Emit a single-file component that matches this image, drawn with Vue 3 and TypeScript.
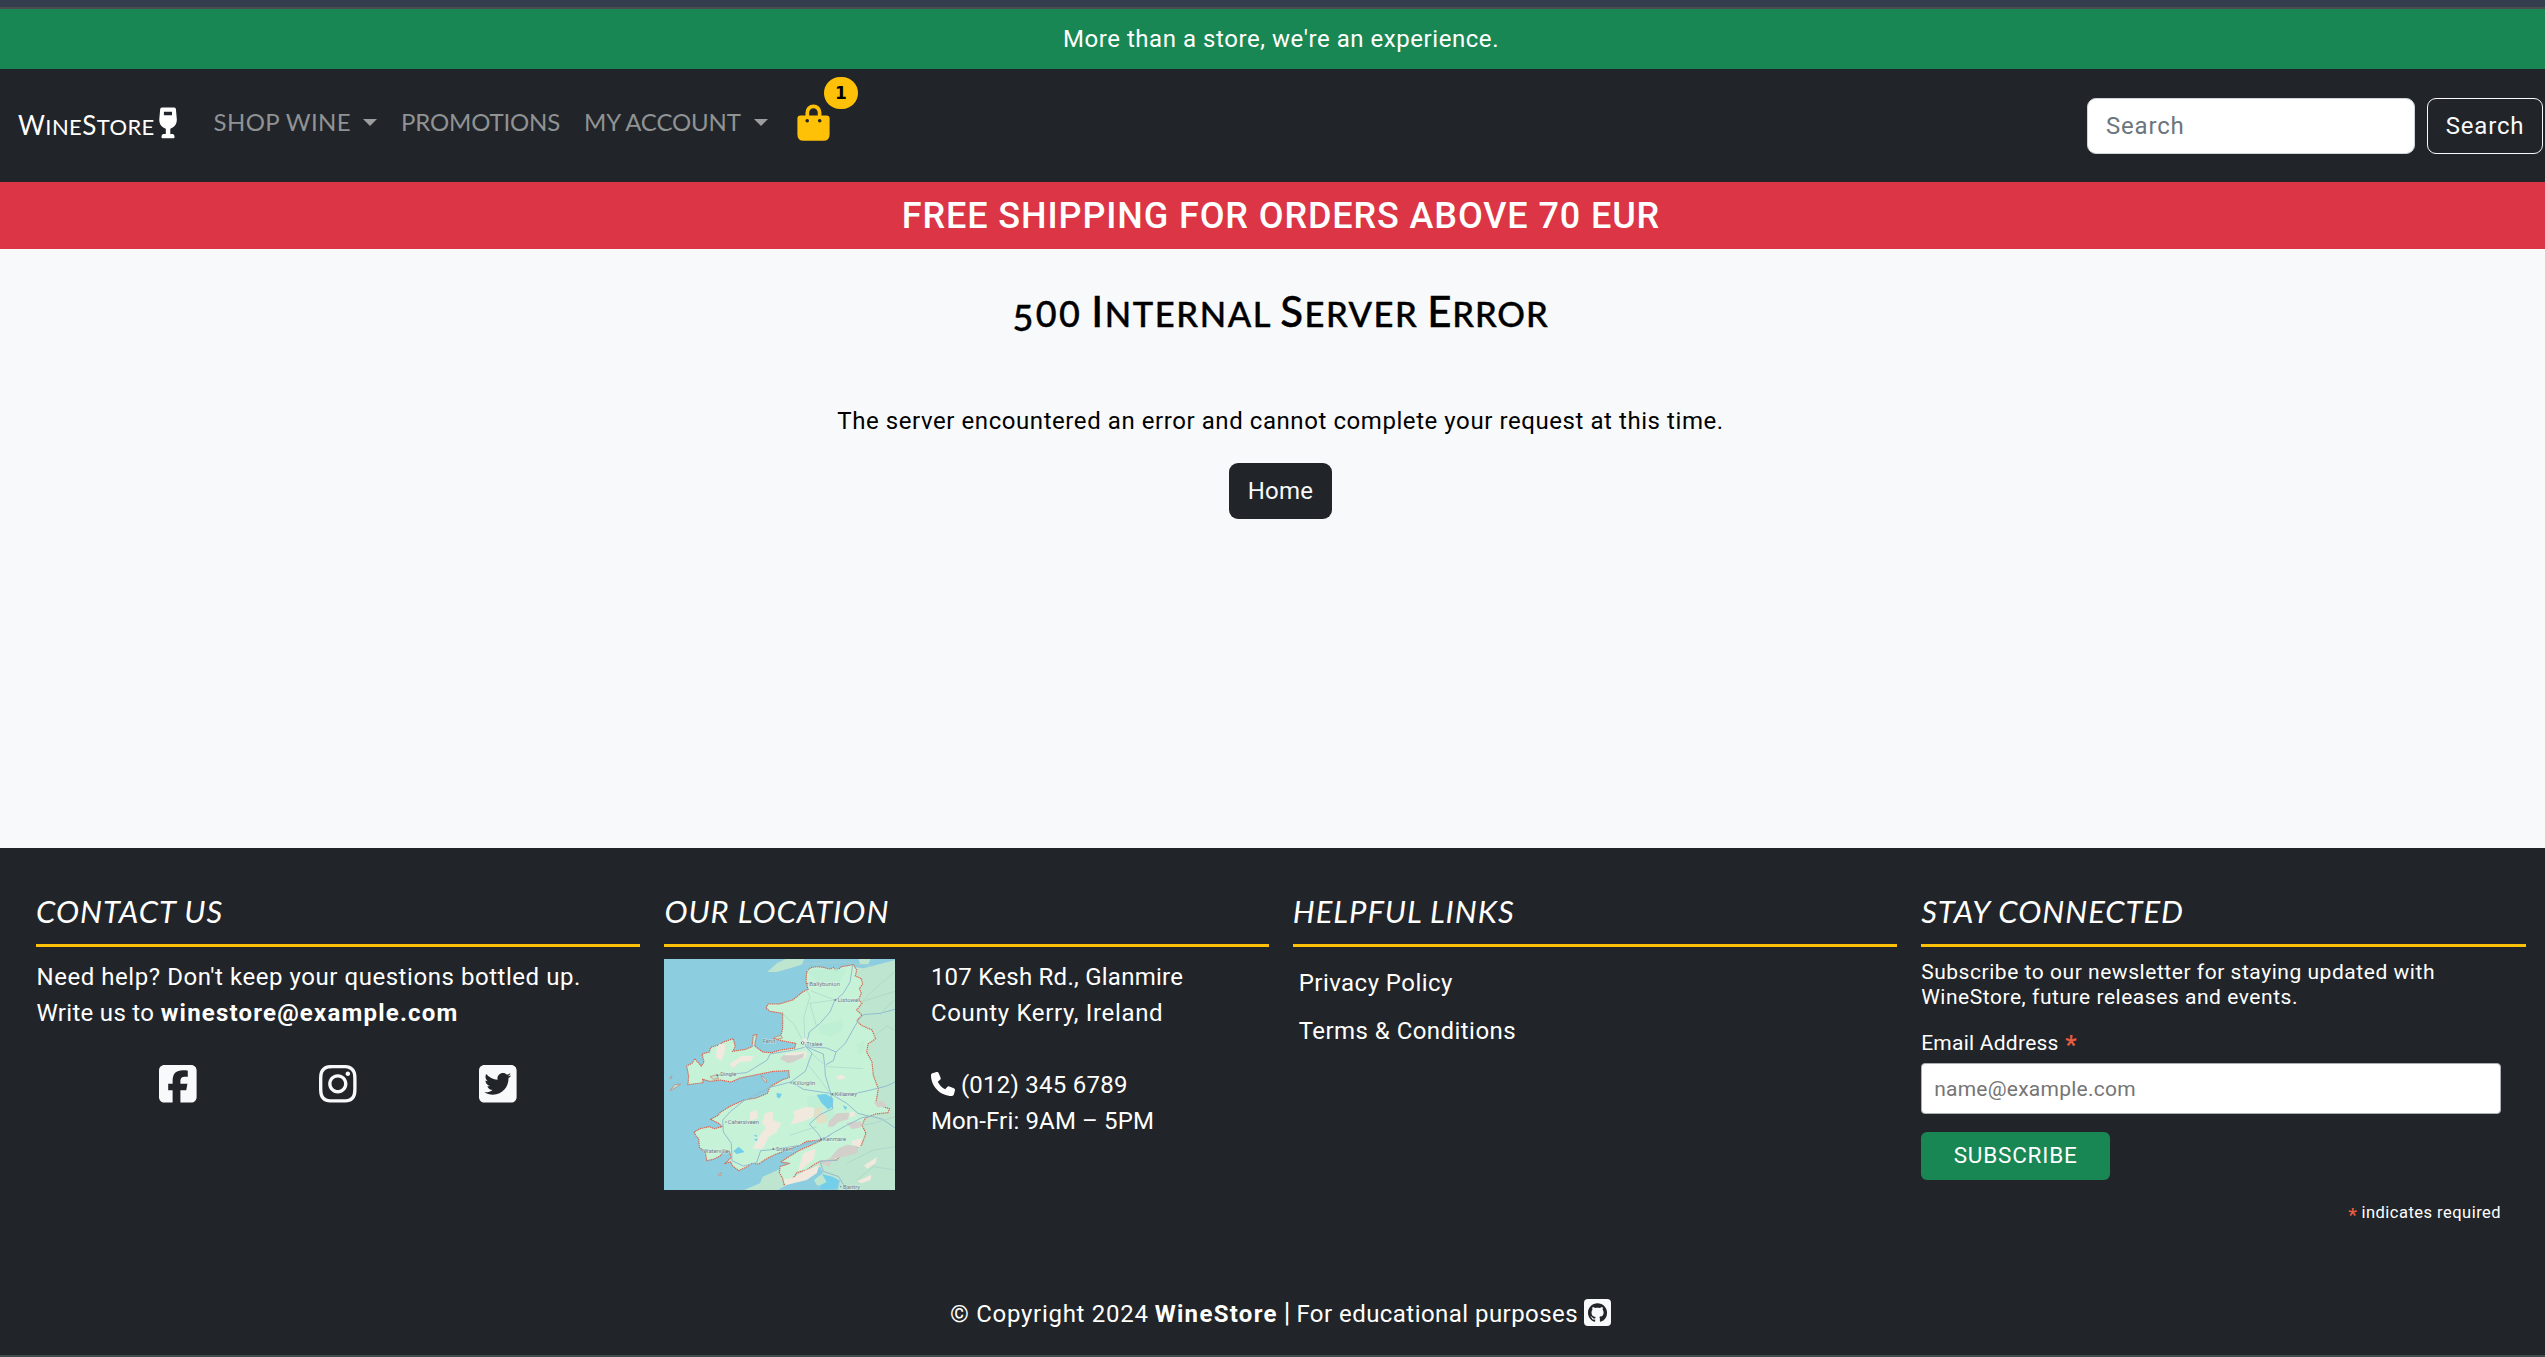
<script setup lang="ts">
interface Place {
  name: string
  x: number
  y: number
  width: number
}

const places: Place[] = [
  { name: 'Ballybunion', x: 448, y: 107, width: 92 },
  { name: 'Listowel', x: 533, y: 157, width: 66 },
  { name: 'Fenit', x: 308, y: 280, width: 38 },
  { name: 'Tralee', x: 439, y: 287, width: 48 },
  { name: 'Dingle', x: 181, y: 379, width: 48 },
  { name: 'Killorglin', x: 399, y: 405, width: 67 },
  { name: 'Killarney', x: 524, y: 439, width: 67 },
  { name: 'Cahersiveen', x: 203, y: 523, width: 94 },
  { name: 'Kenmare', x: 489, y: 572, width: 69 },
  { name: 'Waterville', x: 130, y: 610, width: 76 },
  { name: 'Sneem', x: 348, y: 603, width: 52 },
  { name: 'Bantry', x: 549, y: 716, width: 51 },
]

const social = [
  {
    name: 'Facebook',
    path: 'M64 32C28.7 32 0 60.7 0 96V416c0 35.3 28.7 64 64 64h98.2V334.2H109.4V256h52.8V222.3c0-87.1 39.4-127.5 125-127.5c16.2 0 44.2 3.2 55.7 6.4V172c-6-.6-16.5-1-29.6-1c-42 0-58.2 15.9-58.2 57.2V256h83.6l-14.4 78.2H255V480H384c35.3 0 64-28.7 64-64V96c0-35.3-28.7-64-64-64H64z',
  },
  {
    name: 'Instagram',
    path: 'M224.1 141c-63.6 0-114.9 51.3-114.9 114.9s51.3 114.9 114.9 114.9S339 319.5 339 255.9 287.7 141 224.1 141zm0 189.6c-41.1 0-74.7-33.5-74.7-74.7s33.5-74.7 74.7-74.7 74.7 33.5 74.7 74.7-33.6 74.7-74.7 74.7zm146.4-194.3c0 14.9-12 26.8-26.8 26.8-14.9 0-26.8-12-26.8-26.8s12-26.8 26.8-26.8 26.8 12 26.8 26.8zm76.1 27.2c-1.7-35.9-9.9-67.7-36.2-93.9-26.2-26.2-58-34.4-93.9-36.2-37-2.1-147.9-2.1-184.9 0-35.8 1.7-67.6 9.9-93.9 36.1s-34.4 58-36.2 93.9c-2.1 37-2.1 147.9 0 184.9 1.7 35.9 9.9 67.7 36.2 93.9s58 34.4 93.9 36.2c37 2.1 147.9 2.1 184.9 0 35.9-1.7 67.7-9.9 93.9-36.2 26.2-26.2 34.4-58 36.2-93.9 2.1-37 2.1-147.8 0-184.8zM398.8 388c-7.8 19.6-22.9 34.7-42.6 42.6-29.5 11.7-99.5 9-132.1 9s-102.7 2.6-132.1-9c-19.6-7.8-34.7-22.9-42.6-42.6-11.7-29.5-9-99.5-9-132.1s-2.6-102.7 9-132.1c7.8-19.6 22.9-34.7 42.6-42.6 29.5-11.7 99.5-9 132.1-9s102.7-2.6 132.1 9c19.6 7.8 34.7 22.9 42.6 42.6 11.7 29.5 9 99.5 9 132.1s2.7 102.7-9 132.1z',
  },
  {
    name: 'Twitter',
    path: 'M64 32C28.7 32 0 60.7 0 96V416c0 35.3 28.7 64 64 64H384c35.3 0 64-28.7 64-64V96c0-35.3-28.7-64-64-64H64zM351.3 199.3v0c0 86.7-66 186.6-186.6 186.6c-37.2 0-71.7-10.8-100.7-29.4c5.3 .6 10.4 .8 15.8 .8c30.7 0 58.9-10.4 81.4-28c-28.8-.6-53-19.5-61.3-45.5c10.1 1.5 19.2 1.5 29.6-1.2c-30-6.1-52.5-32.5-52.5-64.4v-.8c8.7 4.9 18.9 7.9 29.6 8.3c-18.3-12.2-29.2-32.7-29.2-54.6c0-12.2 3.2-23.4 8.9-33.1c32.3 39.8 80.8 65.8 135.2 68.6c-9.3-44.5 24-80.6 64-80.6c18.9 0 35.9 7.9 47.9 20.7c14.8-2.8 29-8.3 41.6-15.8c-4.9 15.2-15.2 28-28.8 36.1c13.2-1.4 26-5.1 37.8-10.2c-8.9 13.1-20.1 24.7-32.9 34c.2 2.8 .2 5.7 .2 8.5z',
  },
]
</script>

<template>
  <div class="window">
    <div class="page">
      <div class="strip"></div>
      <div class="tagline">More than a store, we're an experience.</div>

      <nav class="navbar">
        <a class="brand">
          <span>W<small>INE</small>S<small>TORE</small></span>
          <svg class="glass" viewBox="0 0 18 32">
            <path
              fill="#fff"
              fill-rule="evenodd"
              d="M3 .5H15.2Q16.8 .5 16.9 2L17.8 12C18 17.5 15.5 20 11.3 21.8V27H13.7Q15.5 27.3 15.5 29.5V30.3Q15.5 31.2 14.6 31.2H3.4Q2.5 31.2 2.5 30.3V29.5Q2.5 27.3 4.3 27H6.8V21.8C2.5 20 .1 17.5 .3 12L1.2 2Q1.4 .5 3 .5ZM4.9 4.8V8.2H13V4.8Z"
            />
          </svg>
        </a>
        <a class="link shop">SHOP WINE<i class="caret"></i></a>
        <a class="link promo">PROMOTIONS</a>
        <a class="link account">MY ACCOUNT<i class="caret"></i></a>
        <a class="cart">
          <svg viewBox="0 0 33 37">
            <path d="M10.3 13V8.5a6.1 6.1 0 0 1 12.3 0V13" fill="none" stroke="#ffc107" stroke-width="3.7" />
            <path fill="#ffc107" d="M3.5 11.4H29.5Q32.6 11.4 32.6 14.5V30.5Q32.6 36.8 26.3 36.8H6.7Q.4 36.8 .4 30.5V14.5Q.4 11.4 3.5 11.4Z" />
            <circle cx="10.2" cy="16.8" r="1.8" fill="#212529" />
            <circle cx="22.7" cy="16.8" r="1.8" fill="#212529" />
          </svg>
          <span class="badge">1</span>
        </a>
        <form class="search" @submit.prevent>
          <input type="text" placeholder="Search" />
          <button>Search</button>
        </form>
      </nav>

      <div class="shipping">FREE SHIPPING FOR ORDERS ABOVE 70 EUR</div>

      <main>
        <h1>
          <span class="code"><b class="five">5</b>00</span>
          <span class="w1">I<small>NTERNAL</small></span>
          <span class="w2">S<small>ERVER</small></span>
          <span class="w3">E<small>RROR</small></span>
        </h1>
        <p>The server encountered an error and cannot complete your request at this time.</p>
        <a class="home">Home</a>
      </main>

      <footer>
        <div class="columns">
          <section>
            <h2>CONTACT US</h2>
            <div class="body">
              Need help? Don't keep your questions bottled up.<br />
              <span class="write">Write us to</span> <b>winestore@example.com</b>
            </div>
            <div class="social">
              <svg v-for="s in social" :key="s.name" viewBox="0 32 448 448" :aria-label="s.name">
                <path :d="s.path" fill="#f8f9fa" />
              </svg>
            </div>
          </section>

          <section>
            <h2>OUR LOCATION</h2>
            <div class="location">
              <svg class="map" viewBox="12 27 693 693">
                <rect x="12" y="27" width="693" height="693" fill="#8ccde0" />
                <!-- neighbouring counties -->
                <path fill="#bde5cf" d="M322 66L352 38L378 27H433L425 44L385 56L350 66ZM596 27H632L625 42L600 42ZM578 50L610 55L660 42L705 30V720H534L540 690L515 700L500 712L470 705L462 690L490 668L480 650L430 666L378 706L355 720H252L300 700L308 680L365 655L480 600L600 480Z" />
                <!-- county body -->
                <path
                  fill="#c6f3d8"
                  stroke="#d9604c"
                  stroke-width="3.4"
                  stroke-dasharray="4 2.2"
                  d="M440 66L452 53L470 50L490 52L510 58L520 52L528 62L545 50L580 44L590 60L586 78L604 86L608 103L598 115L604 130L596 148L606 160L590 180L606 195L590 212L604 226L636 240L647 266L624 282L620 306L636 336L640 376L655 416L648 456L664 468L688 476L684 488L646 492L616 504L606 526L618 550L604 586L576 600L548 610L530 630L480 634L460 645L440 660L410 668L396 690L372 705L368 685L358 668L360 650L390 640L362 636L390 618L420 600L448 588L486 570L440 574L420 586L380 600L344 614L320 626L296 642L276 640L262 650L236 662L218 648L212 636L196 640L214 622L208 604L190 606L180 618L160 628L140 632L136 606L118 592L116 566L108 558L102 546L120 536L148 530L164 536L186 530L176 520L152 508L174 496L182 486L212 468L252 450L288 444L322 430L330 410L366 390L388 382L386 362L340 364L270 378L240 384L214 396L180 390L150 394L128 388L130 398L84 404L86 378L80 348L96 340L104 326L124 348L132 336L126 312L148 306L152 292L178 284L190 276L220 266L226 290L218 304L256 298L276 290L280 256L290 254L284 288L308 306L334 308L362 300L404 294L408 280L386 276L366 272L342 266L362 258L368 236L368 190L330 184L318 174L324 162L358 162L398 150L428 126L444 118L438 96Z"
                />
                <g fill="#b8e6d2" stroke="#ce7b68" stroke-width="2">
                  <path d="M30 422L44 404L62 402L48 412ZM28 384L36 378L34 386ZM174 674L184 668L182 678ZM304 376L320 390L318 398L306 384ZM342 262L362 256L368 264L350 268ZM150 380L170 374L176 386L160 388Z" />
                </g>
                <g fill="#bdeed4" opacity=".8">
                  <path d="M480 226L548 210L550 240L510 262L476 250ZM440 60L560 56L540 96L470 96ZM590 284L612 270L616 304L596 314ZM440 440L520 430L524 520L450 500Z" />
                </g>
                <g fill="#f2e9de">
                  <path d="M178 282L194 282L196 300L184 334L168 322L170 296ZM208 342L246 318L280 318L274 334L240 336L218 354ZM376 310L440 304L438 322L400 334L370 326ZM528 378L546 374L558 384L536 390ZM316 490L340 484L338 510L364 520L350 546L326 560L308 596L278 596L296 560L318 534L306 516ZM270 488L290 480L294 504L270 512ZM400 484L440 470L464 474L460 500L430 514L392 524L404 500ZM430 610L466 596L462 626L430 654L414 664L424 630ZM400 684L434 662L478 646L470 670L440 690L376 706L372 688ZM574 574L606 564L600 592L580 590ZM612 646L650 622L648 638L622 656ZM592 694L634 674L632 690L604 700ZM568 488L584 484L584 498L570 502Z" />
                </g>
                <g fill="#d3cfcb">
                  <path d="M360 326L370 316L410 316L432 310L430 322L400 336L384 340ZM508 512L530 490L568 488L564 508L536 516L520 530L502 530ZM558 518L604 514L602 532L576 538ZM534 596L560 584L592 588L594 608L560 618L520 626L508 650L478 638L510 624ZM642 456L670 452L680 470L652 472Z" />
                </g>
                <path fill="#efd9bd" opacity=".7" d="M464 476L486 468V490L500 496V518L474 522L462 500Z" />
                <g fill="#73cfe9">
                  <path d="M470 434L498 432L520 446L518 470L504 478L484 458ZM350 428L366 432L358 446L350 440ZM548 466L562 472L556 480ZM220 604L236 590L254 606L230 612ZM280 554L292 556L290 562ZM282 568L294 566L290 574ZM270 286L280 284L280 290ZM486 672L518 680L536 690L530 714L486 720L480 706L500 696Z" />
                </g>
                <g fill="none" stroke="#93bcd0" stroke-width="3">
                  <path d="M578 46L570 96L550 130L524 152L510 186L480 220L448 246L444 262L436 288L456 310L448 330L436 364L392 396L330 412L252 452L212 484L188 510L190 546L214 580L216 632L250 648L290 638L302 602L344 598L420 586L484 568L510 556" />
                  <path d="M438 290L490 312L494 346L496 376L512 430L518 476L480 494L448 522L474 550L486 570L520 548L560 526L604 504L632 498L668 508L705 534" />
                  <path d="M440 290L500 294L528 306L520 332L498 344M528 306L556 280L594 212L610 194L660 190L705 178M394 396L430 418L510 430L560 436L624 422L680 408L705 396M516 434L560 460L594 490L632 500M172 376L260 368L322 330L330 312L400 300L434 292M530 630L480 634L490 664L536 680L560 720" />
                </g>
                <g fill="none" stroke="#abd2c8" stroke-width="2">
                  <path d="M440 120L450 140L432 200L434 270M366 190L400 220L430 274M452 122L524 150M470 230L450 160L524 150M454 310L500 350L610 356M440 340L484 394L510 430M608 154L705 124M606 156L630 130L705 64M640 260L680 228L705 240M660 196L680 170L705 150M430 42L560 36L590 42L640 48M600 526L640 520L705 500M560 640L640 600L705 590M590 690L640 650L705 660M390 556L470 530" />
                </g>
                <circle cx="434" cy="273" r="9" fill="#e5eae8" />
                <circle cx="428" cy="279" r="4" fill="#fff" stroke="#66747c" stroke-width="2.5" />
                <g fill="#727f84">
                  <circle cx="443" cy="101" r="2" /><circle cx="526" cy="150" r="3" /><circle cx="172" cy="376" r="3" />
                  <circle cx="393" cy="399" r="2" /><circle cx="517" cy="433" r="3" /><circle cx="198" cy="516" r="2" />
                  <circle cx="483" cy="568" r="3" /><circle cx="340" cy="597" r="3" /><circle cx="542" cy="710" r="2" />
                </g>
                <g class="places">
                  <text v-for="p in places" :key="p.name" :x="p.x" :y="p.y" :textLength="p.width" lengthAdjust="spacingAndGlyphs">{{ p.name }}</text>
                </g>
              </svg>
              <div class="body address">
                <span class="a1">107 Kesh Rd., Glanmire</span><br />
                County Kerry, Ireland<br /><br />
                <svg class="phone" viewBox="0 0 512 512">
                  <path
                    fill="#fff"
                    d="M164.9 24.6c-7.7-18.6-28-28.5-47.4-23.2l-88 24C12.1 30.2 0 46 0 64C0 311.4 200.6 512 448 512c18 0 33.8-12.1 38.6-29.5l24-88c5.3-19.4-4.6-39.7-23.2-47.4l-96-40c-16.3-6.8-35.2-2.1-46.3 11.6L304.7 368C234.3 334.7 177.3 277.7 144 207.3L193.3 167c13.7-11.2 18.4-30 11.6-46.3l-40-96z"
                  /></svg><span class="a1 num">(012) 345 6789</span><br />
                <span class="a2">Mon-Fri: 9AM – 5PM</span>
              </div>
            </div>
          </section>

          <section>
            <h2>HELPFUL LINKS</h2>
            <div class="links">
              <a>Privacy Policy</a>
              <a>Terms &amp; Conditions</a>
            </div>
          </section>

          <section>
            <h2>STAY CONNECTED</h2>
            <div class="newsletter">
              <div>Subscribe to our newsletter for staying updated with<br />WineStore, future releases and events.</div>
              <label>Email Address <em>*</em></label>
              <input type="text" placeholder="name@example.com" />
              <button>SUBSCRIBE</button>
              <div class="required"><em>*</em> indicates required</div>
            </div>
          </section>
        </div>

        <div class="copyright">
          <span class="year">© Copyright 2024</span>
          <b>WineStore</b>
          <span class="bar">|</span>
          <span class="edu">For educational purposes</span>
          <svg viewBox="0 0 27 27">
            <rect width="27" height="27" rx="4" fill="#f8f9fa" />
            <path
              transform="translate(4 4.2) scale(1.19)"
              fill="#212529"
              d="M8 0C3.58 0 0 3.58 0 8c0 3.54 2.29 6.53 5.47 7.59.4.07.55-.17.55-.38 0-.19-.01-.82-.01-1.49-2.01.37-2.53-.49-2.69-.94-.09-.23-.48-.94-.82-1.13-.28-.15-.68-.52-.01-.53.63-.01 1.08.58 1.23.82.72 1.21 1.87.87 2.33.66.07-.52.28-.87.51-1.07-1.78-.2-3.64-.89-3.64-3.95 0-.87.31-1.59.82-2.15-.08-.2-.36-1.02.08-2.12 0 0 .67-.21 2.2.82.64-.18 1.32-.27 2-.27.68 0 1.36.09 2 .27 1.53-1.04 2.2-.82 2.2-.82.44 1.1.16 1.92.08 2.12.51.56.82 1.27.82 2.15 0 3.07-1.87 3.75-3.65 3.95.29.25.54.73.54 1.48 0 1.07-.01 1.93-.01 2.2 0 .21.15.46.55.38A8.013 8.013 0 0016 8c0-4.42-3.58-8-8-8z"
            />
          </svg>
        </div>
      </footer>
      <div class="edge"></div>
    </div>
  </div>
</template>

<style>
html,
body {
  overflow: hidden;
}
</style>

<style scoped>
* {
  box-sizing: border-box;
}
.window {
  width: 2545px;
  height: 1357px;
  overflow: hidden;
}
.page {
  width: 2561px;
  height: 1357px;
  display: flex;
  flex-direction: column;
  background: #f8f9fa;
  font: 24px/36px Roboto, 'Liberation Sans', sans-serif;
  letter-spacing: 0.55px;
  color: #000;
}
.strip {
  flex: none;
  height: 9px;
  background: #343d4e;
  border-bottom: 2px solid #4c4c50;
}
.tagline {
  flex: none;
  height: 60px;
  padding: 12px 0 0 1px;
  text-align: center;
  background: #198754;
  color: #fff;
}
.navbar {
  flex: none;
  height: 113px;
  display: flex;
  align-items: flex-start;
  background: #212529;
  padding: 29px 18px 0 18px;
}
.brand {
  display: flex;
  align-items: flex-start;
  width: 195px;
  color: #fff;
  font: 26px/36px Lato, sans-serif;
  letter-spacing: 0.4px;
  white-space: nowrap;
}
.brand span {
  width: 141px;
  padding-top: 9px;
}
.brand small {
  font-size: 22px;
}
.glass {
  width: 18px;
  height: 32px;
  margin-top: 9px;
}
.link {
  display: flex;
  align-items: center;
  padding-top: 6px;
  font: 24px/36px Lato, sans-serif;
  color: #909294;
  white-space: nowrap;
}
.shop {
  width: 188px;
  padding-left: 0.5px;
  letter-spacing: 0.4px;
}
.promo {
  width: 183px;
  letter-spacing: -0.15px;
}
.account {
  width: 184px;
  letter-spacing: -0.15px;
}
.caret {
  margin-left: auto;
  border: 7px solid transparent;
  border-top-color: #9b9d9e;
  border-bottom: 0;
}
.shop .caret {
  margin-right: 24px;
}
.account .caret {
  margin-right: 0;
}
.cart {
  position: relative;
  width: 33px;
  height: 37px;
  margin: 6px 0 0 29px;
}
.cart svg {
  display: block;
  width: 33px;
  height: 37px;
}
.badge {
  position: absolute;
  left: 27px;
  top: -27px;
  width: 34px;
  height: 32px;
  border-radius: 16px;
  background: #ffc107;
  color: #000;
  text-align: center;
  font: bold 17px/33px 'DejaVu Sans', sans-serif;
  letter-spacing: 0;
}
.search {
  display: flex;
  gap: 12px;
  margin-left: auto;
}
input::placeholder {
  opacity: 1;
  color: #6c757d;
}
.search input {
  width: 328px;
  height: 56px;
  padding: 0 18px;
  border: 1px solid #ced4da;
  border-radius: 9px;
  font: inherit;
  letter-spacing: 0.8px;
}
.search button {
  width: 116px;
  height: 56px;
  padding: 0;
  border: 1px solid #f8f9fa;
  border-radius: 9px;
  background: transparent;
  color: #f8f9fa;
  font: inherit;
  letter-spacing: 0.8px;
}
.shipping {
  flex: none;
  height: 67px;
  padding: 13px 0 0 1px;
  background: #dc3545;
  color: #fff;
  text-align: center;
  font: 500 36px/43px Roboto, sans-serif;
  letter-spacing: 0.88px;
}
main {
  flex: none;
  height: 599px;
  padding-top: 37px;
  display: flex;
  flex-direction: column;
  align-items: center;
}
h1 {
  display: flex;
  align-items: baseline;
  height: 51px;
  margin: 0 0 66px;
  font: 500 42px/51px Lato, sans-serif;
  -webkit-text-stroke: 0.4px #000;
}
h1 small {
  font-size: 34.5px;
}
.code {
  font-size: 36px;
  letter-spacing: 2.4px;
  margin-right: 9px;
}
.five {
  display: inline-block;
  font-weight: inherit;
  transform: translateY(4px);
}
.w1 {
  letter-spacing: 1.6px;
  margin-right: 8px;
}
.w2 {
  letter-spacing: 1.5px;
  margin-right: 9px;
}
.w3 {
  letter-spacing: 0.9px;
}
main p {
  margin: 0 0 24px;
  letter-spacing: 0.57px;
}
.home {
  width: 103px;
  height: 56px;
  line-height: 56px;
  border-radius: 9px;
  text-align: center;
  background: #212529;
  color: #f8f9fa;
  letter-spacing: 0.2px;
}
footer {
  flex: none;
  height: 507px;
  background: #212529;
  color: #fff;
  padding: 45px 0 0 24px;
}
.columns {
  display: flex;
  width: 2513.5px;
  height: 403px;
}
section {
  flex: 1 1 0;
  min-width: 0;
  padding: 0 12px;
}
h2 {
  margin: 0 0 12px;
  height: 54px;
  border-bottom: 3px solid #ffc107;
  font: italic 400 31px/37px Lato, sans-serif;
  letter-spacing: 0.95px;
}
.body {
  padding-left: 0.5px;
}
.body b {
  letter-spacing: 1.2px;
}
.write {
  letter-spacing: 0.3px;
}
.social {
  display: flex;
  gap: 122.5px;
  margin: 34px 0 0 123px;
}
.social svg {
  width: 37.6px;
  height: 37.6px;
}
.location {
  display: flex;
  gap: 35px;
}
.map {
  width: 231px;
  height: 231px;
}
.places {
  font: 17px Roboto, sans-serif;
  letter-spacing: 0;
  fill: #6f7b84;
  stroke: #e6f2f0;
  stroke-width: 3px;
  stroke-opacity: 0.6;
  paint-order: stroke;
}
.address {
  letter-spacing: 0.66px;
}
.a1 {
  letter-spacing: 0.25px;
}
.a2 {
  letter-spacing: 0.15px;
}
.num {
  margin-left: 6px;
}
.phone {
  width: 24px;
  height: 24px;
  vertical-align: -3px;
}
.links {
  display: flex;
  flex-direction: column;
  gap: 12px;
  padding: 6px 0 0 6px;
  letter-spacing: 0.45px;
}
.newsletter {
  width: 580px;
  display: flex;
  flex-direction: column;
  align-items: flex-start;
  padding-top: 1px;
  font-size: 21px;
  line-height: 25px;
  letter-spacing: 0.54px;
  white-space: nowrap;
}
.newsletter label {
  margin: 21px 0 7px;
  letter-spacing: 0.25px;
}
.newsletter em {
  font-style: normal;
  font-weight: bold;
  color: #e85c41;
}
.newsletter label em {
  font-size: 25px;
  line-height: 20px;
  vertical-align: -4px;
  margin-left: 1px;
}
.newsletter input {
  width: 580px;
  height: 51px;
  padding: 0 12px;
  border: 1px solid #abb0b2;
  border-radius: 4px;
  font: inherit;
  letter-spacing: 0.25px;
}
.newsletter input::placeholder {
  color: #757575;
}
.newsletter button {
  width: 189px;
  height: 48px;
  margin-top: 18px;
  padding: 0 0 2px;
  border: 0;
  border-radius: 6px;
  background: #198754;
  color: #fff;
  font: 22.5px Roboto, sans-serif;
  letter-spacing: 0.8px;
}
.required {
  align-self: flex-end;
  margin-top: 20px;
  font-size: 16.5px;
  letter-spacing: 0.48px;
}
.required em {
  font-size: 19px;
  line-height: 16px;
  vertical-align: -3px;
  margin-right: -0.5px;
}
.copyright {
  display: flex;
  align-items: flex-start;
  justify-content: center;
  padding-right: 24px;
}
.copyright b {
  margin: 0 6px 0 6px;
  letter-spacing: 1.3px;
}
.year {
  letter-spacing: 0.72px;
}
.bar {
  font-size: 27px;
  line-height: 34px;
  letter-spacing: 0;
  margin-right: 6px;
}
.edu {
  letter-spacing: 0.45px;
}
.copyright svg {
  width: 27px;
  height: 27px;
  margin: 3px 0 0 6px;
}
.edge {
  flex: none;
  height: 2px;
  background: #3e4c50;
}
</style>
